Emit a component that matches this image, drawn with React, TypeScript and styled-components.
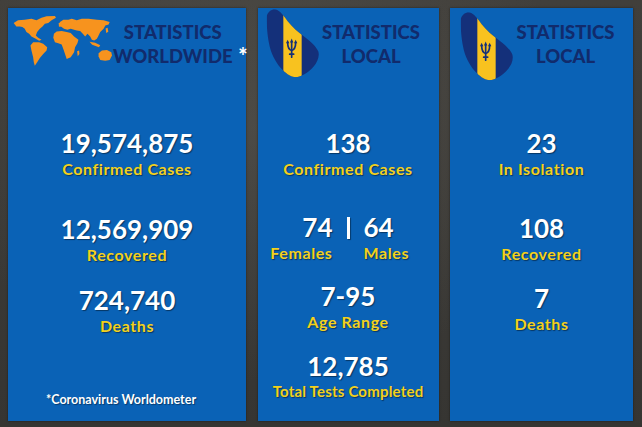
import React from 'react';
import styled, { createGlobalStyle } from 'styled-components';

const GlobalStyle = createGlobalStyle`
  html, body {
    margin: 0;
    padding: 0;
    background: #3b3a38;
  }
  * { box-sizing: border-box; }
`;

const Board = styled.div`
  width: 642px;
  height: 427px;
  padding: 8px 9px 6px 8px;
  display: grid;
  grid-template-columns: 238px 181px 183px;
  justify-content: space-between;
  background:
    radial-gradient(ellipse at 40% 30%, rgba(120, 118, 110, 0.25), transparent 60%),
    linear-gradient(180deg, #413f3b 0%, #363532 100%);
  font-family: Lato, 'Liberation Sans', sans-serif;
`;

const Panel = styled.div`
  background: #0a62b6;
  display: flex;
  flex-direction: column;
  align-items: stretch;
  box-shadow: 0 0 2px rgba(0, 0, 0, 0.5);
`;

const Header = styled.div<{ $pad: number }>`
  height: 84px;
  display: flex;
  align-items: flex-start;
  padding-left: ${p => p.$pad}px;
`;

const IconBox = styled.div<{ $top: number }>`
  margin-top: ${p => p.$top}px;
  flex: none;
  display: flex;
`;

const Title = styled.div<{ $right?: number }>`
  flex: 1;
  position: relative;
  margin-top: 12px;
  padding-right: ${p => p.$right ?? 16}px;
  text-align: center;
  color: #112b6c;
  font-size: 18.5px;
  line-height: 24px;
  font-weight: 900;
`;

const Star = styled.span`
  position: absolute;
  right: 6px;
  top: 25px;
  color: #fff;
  font-size: 22px;
  line-height: 22px;
  font-weight: 900;
`;

const Stat = styled.div<{ $mt: number }>`
  margin-top: ${p => p.$mt}px;
  text-align: center;
`;

const Num = styled.div`
  color: #fff;
  font-size: 26px;
  line-height: 31px;
  font-weight: 700;
  text-shadow: 1px 1px 1px rgba(0, 0, 0, 0.45);
`;

const Label = styled.div<{ $tight?: boolean }>`
  color: #f3d11c;
  font-size: ${p => (p.$tight ? 15 : 16)}px;
  line-height: 19.5px;
  font-weight: 700;
  letter-spacing: ${p => (p.$tight ? 0.2 : 0.6)}px;
  text-shadow: 1px 1px 1px rgba(0, 0, 0, 0.45);
  white-space: nowrap;
`;

const Split = styled.div<{ $mt: number }>`
  margin-top: ${p => p.$mt}px;
  display: grid;
  grid-template-columns: 1fr auto 1fr;
  column-gap: 14px;
`;

const Side = styled.div<{ $align: 'left' | 'right' }>`
  text-align: ${p => p.$align};
`;

const Bar = styled.div`
  width: 3px;
  height: 22px;
  margin-top: 5px;
  background: #fff;
  box-shadow: 1px 1px 1px rgba(0, 0, 0, 0.4);
`;

const Footnote = styled.div`
  margin-top: auto;
  margin-bottom: 13px;
  padding-right: 12px;
  text-align: center;
  color: #fff;
  font-size: 12.5px;
  line-height: 16px;
  font-weight: 700;
  text-shadow: 1px 1px 1px rgba(0, 0, 0, 0.4);
`;

const WorldMap = () => (
  <svg width="100" height="52" viewBox="40 45 298 153">
    <g fill="#f7931e">
      <path d="M42 68 L55 60 L75 58 L95 55 L110 60 L125 52 L140 48 L165 47 L168 52 L155 60 L145 68 L135 70 L128 78 L120 85 L112 95 L108 105 L115 112 L125 118 L118 121 L105 113 L95 108 L88 100 L80 95 L75 85 L68 80 L60 78 L50 78 Z" />
      <path d="M100 125 L118 125 L130 130 L142 140 L140 150 L130 160 L120 172 L112 185 L105 195 L102 185 L100 170 L95 150 L92 135 Z" />
      <path d="M180 65 L190 58 L205 58 L215 55 L230 60 L245 55 L265 55 L290 58 L310 60 L328 65 L325 72 L315 75 L310 85 L300 95 L295 105 L290 115 L282 120 L275 118 L270 108 L262 100 L255 108 L248 100 L240 92 L230 90 L222 88 L212 85 L202 88 L192 85 L185 80 L178 75 Z" />
      <path d="M162 100 L170 93 L185 92 L200 95 L212 98 L222 108 L235 118 L232 128 L225 140 L222 155 L212 170 L200 175 L195 160 L190 145 L185 132 L175 128 L165 125 L160 112 Z" />
      <path d="M231 152 L237 150 L238 160 L233 167 Z" />
      <path d="M295 158 L305 150 L320 148 L333 155 L335 165 L328 178 L315 180 L300 178 L295 168 Z" />
      <path d="M268 124 L285 127 L300 134 L296 140 L276 133 Z" />
      <path d="M316 84 L322 82 L324 94 L318 98 Z" />
      <path d="M176 68 L183 66 L184 78 L177 79 Z" />
    </g>
  </svg>
);

const Barbados = ({ id }: { id: string }) => {
  const outline =
    'M72 30 C63 33 55 42 55 55 C55 75 57 105 62 130 C67 158 80 185 98 205 C110 218 125 230 140 232 C160 232 180 218 196 200 C208 186 214 168 210 155 C204 140 188 126 170 112 C150 97 132 82 118 64 C108 50 98 36 88 31 C82 28 77 28 72 30 Z';
  return (
    <svg width="55" height="71" viewBox="50 25 165 212">
      <defs>
        <clipPath id={id}>
          <path d={outline} />
        </clipPath>
      </defs>
      <g clipPath={`url(#${id})`}>
        <rect x="40" y="20" width="190" height="230" fill="#14307a" />
        <rect x="105" y="20" width="55" height="230" fill="#f8c21f" />
      </g>
      <g fill="none" stroke="#14307a" strokeWidth="5" strokeLinecap="round">
        <path d="M130 126 L130 172" />
        <path d="M118 128 C118 145 122 150 130 152 C138 150 142 145 142 128" />
        <path d="M124 163 L136 163" />
      </g>
      <g fill="#14307a">
        <path d="M130 116 L135 128 L125 128 Z" />
        <path d="M118 120 L123 130 L113 130 Z" />
        <path d="M142 120 L147 130 L137 130 Z" />
      </g>
    </svg>
  );
};

export default function App() {
  return (
    <>
      <GlobalStyle />
      <Board>
        <Panel>
          <Header $pad={5}>
            <IconBox $top={7}>
              <WorldMap />
            </IconBox>
            <Title $right={21}>
              STATISTICS
              <br />
              WORLDWIDE
              <Star>*</Star>
            </Title>
          </Header>
          <Stat $mt={35.5}>
            <Num>19,574,875</Num>
            <Label>Confirmed Cases</Label>
          </Stat>
          <Stat $mt={35.5}>
            <Num>12,569,909</Num>
            <Label>Recovered</Label>
          </Stat>
          <Stat $mt={20.5}>
            <Num>724,740</Num>
            <Label>Deaths</Label>
          </Stat>
          <Footnote>*Coronavirus Worldometer</Footnote>
        </Panel>

        <Panel>
          <Header $pad={7}>
            <IconBox $top={0}>
              <Barbados id="bb-a" />
            </IconBox>
            <Title>
              STATISTICS
              <br />
              LOCAL
            </Title>
          </Header>
          <Stat $mt={35.5}>
            <Num>138</Num>
            <Label>Confirmed Cases</Label>
          </Stat>
          <Split $mt={33.5}>
            <Side $align="right">
              <Num>74</Num>
              <Label>Females</Label>
            </Side>
            <Bar />
            <Side $align="left">
              <Num>64</Num>
              <Label>Males</Label>
            </Side>
          </Split>
          <Stat $mt={18.5}>
            <Num>7-95</Num>
            <Label>Age Range</Label>
          </Stat>
          <Stat $mt={19.5}>
            <Num>12,785</Num>
            <Label $tight>Total Tests Completed</Label>
          </Stat>
        </Panel>

        <Panel>
          <Header $pad={9}>
            <IconBox $top={3}>
              <Barbados id="bb-b" />
            </IconBox>
            <Title>
              STATISTICS
              <br />
              LOCAL
            </Title>
          </Header>
          <Stat $mt={35.5}>
            <Num>23</Num>
            <Label>In Isolation</Label>
          </Stat>
          <Stat $mt={34.5}>
            <Num>108</Num>
            <Label>Recovered</Label>
          </Stat>
          <Stat $mt={19.5}>
            <Num>7</Num>
            <Label>Deaths</Label>
          </Stat>
        </Panel>
      </Board>
    </>
  );
}
